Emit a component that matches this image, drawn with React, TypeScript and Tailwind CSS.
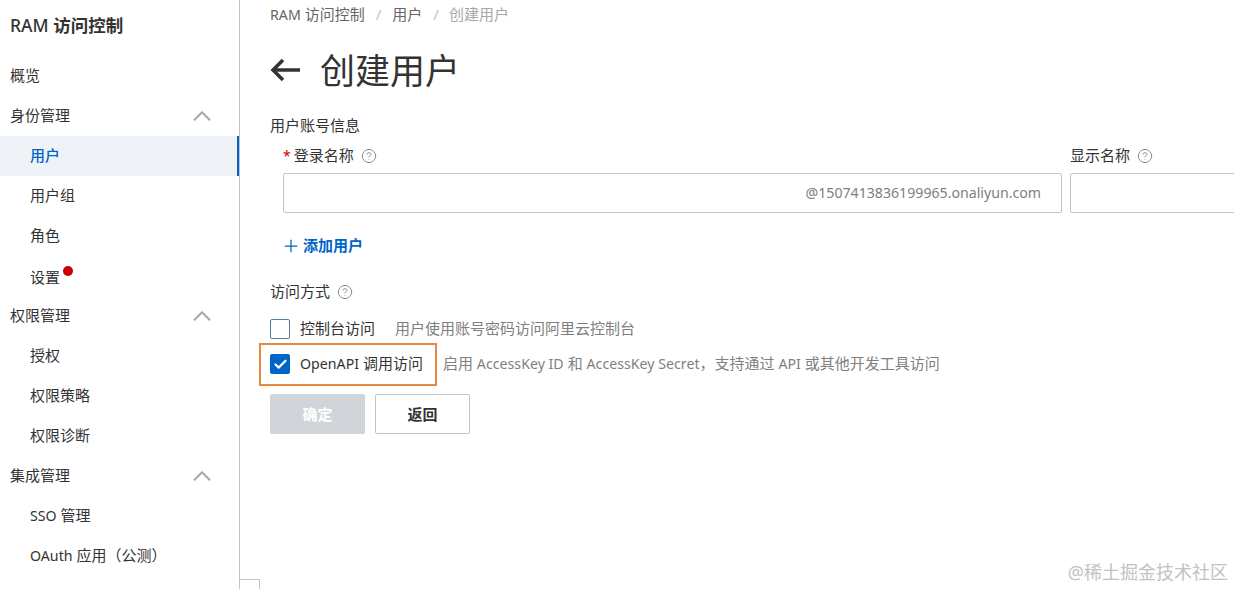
import { Check, ChevronUp, CircleHelp, Plus } from 'lucide-react'

const fontStack = "font-['Noto_Sans','Noto_Sans_CJK_SC',sans-serif]"
const raised = 'inline-block -translate-y-px'

const menu = [
  { label: '概览' },
  { label: '身份管理', group: true },
  { label: '用户', sub: true, active: true },
  { label: '用户组', sub: true },
  { label: '角色', sub: true },
  { label: '设置', sub: true, dot: true },
  { label: '权限管理', group: true },
  { label: '授权', sub: true },
  { label: '权限策略', sub: true },
  { label: '权限诊断', sub: true },
  { label: '集成管理', group: true },
  { label: 'SSO 管理', sub: true },
  { label: 'OAuth 应用（公测）', sub: true },
]

// latin runs sit a bit smaller next to 15px CJK, same proportions as the original font pair
function Mixed({ text }: { text: string }) {
  return (
    <span className={raised}>
      {text.split(/([A-Za-z0-9@.]+(?: [A-Za-z0-9@.]+)*)/).map((part, index) =>
        index % 2 === 1 ? (
          <span key={index} className="text-[14.2px]">
            {part}
          </span>
        ) : (
          part
        ),
      )}
    </span>
  )
}

function Help({ className = '' }: { className?: string }) {
  return <CircleHelp size={16} strokeWidth={1.5} className={`text-[#8a8a8a] shrink-0 ${className}`} />
}

export default function App() {
  return (
    <div className={`relative flex w-[1234px] h-[589px] overflow-hidden bg-white text-[15px] text-[#333333] ${fontStack}`}>
      {/* Sidebar */}
      <aside className="w-[240px] shrink-0 border-r border-[#c4c4c4]">
        <div className="h-[56px] pl-[10px] pt-[12px] leading-[26px] text-[#333333]">
          <span className="text-[17.5px] font-medium">RAM </span>
          <span className="text-[17.5px] font-bold">访问控制</span>
        </div>
        {menu.map((item) => (
          <div
            key={item.label}
            className={`relative flex items-center h-10 ${item.sub ? 'pl-[30px]' : 'pl-[10px]'} ${
              item.active ? 'bg-[#eff3f8] border-r-2 border-[#0064c8] font-medium text-[#0064c8]' : ''
            } ${item.dot ? 'pt-1' : ''}`}
          >
            <Mixed text={item.label} />
            {item.dot && <span className="absolute left-[63px] top-[10px] w-[10px] h-[10px] rounded-full bg-[#c80000]" />}
            {item.group && <ChevronUp size={30} strokeWidth={1.6} className="ml-auto mr-[22px] text-[#a8a8a8]" />}
          </div>
        ))}
      </aside>

      {/* Main */}
      <main className="flex-1 min-w-0 pl-[30px]">
        <div className="flex items-center h-[30px] text-[#666666]">
          <Mixed text="RAM 访问控制" />
          <span className={`mx-[11px] text-[#c4c4c4] ${raised}`}>/</span>
          <span className={raised}>用户</span>
          <span className={`ml-[11px] mr-[10px] text-[#c4c4c4] ${raised}`}>/</span>
          <span className={`text-[#a8a8a8] ${raised}`}>创建用户</span>
        </div>

        <div className="flex items-center h-[50px] mt-[15px]">
          <svg width="30" height="24" viewBox="0 0 30 24" fill="none" stroke="#333333" strokeWidth="3.5" className="shrink-0">
            <path d="M3 12H30" />
            <path d="M13 2L3 12L13 22" />
          </svg>
          <h1 className="ml-[20px] text-[35px] leading-[50px] font-normal text-[#333333] translate-y-px">创建用户</h1>
        </div>

        <div className="mt-[21px] leading-5">
          <span className={raised}>用户账号信息</span>
        </div>

        <div className="flex pl-[13px] mt-[10px] gap-2">
          <div className="w-[779px] shrink-0">
            <div className="flex items-center h-5 gap-[7px]">
              <span className={raised}>
                <span className="text-sm text-[#c80000] mr-[3px]">*</span>登录名称
              </span>
              <Help />
            </div>
            <div className="flex items-center justify-end h-10 mt-[7px] pr-5 rounded-[2px] border border-[#c4c4c4] text-[14.15px] text-[#808080]">
              @1507413836199965.onaliyun.com
            </div>
          </div>
          <div className="w-[300px] shrink-0">
            <div className="flex items-center h-5 gap-[7px]">
              <span className={raised}>显示名称</span>
              <Help />
            </div>
            <div className="h-10 mt-[7px] rounded-[2px] border border-[#c4c4c4]" />
          </div>
        </div>

        <div className="flex items-center h-5 mt-[23px] ml-[11px] text-[#0064c8] font-bold">
          <Plus size={20} strokeWidth={1.5} className="mr-[2px]" />
          <span className={raised}>添加用户</span>
        </div>

        <div className="flex items-center h-5 mt-[26px] gap-[7px]">
          <span className={raised}>访问方式</span>
          <Help />
        </div>

        <div className="flex items-center h-5 mt-[17px]">
          <span className="w-5 h-5 shrink-0 rounded-[2px] border border-[#5c7a99]" />
          <span className={`ml-[10px] ${raised}`}>控制台访问</span>
          <span className={`ml-[20px] text-[#808080] ${raised}`}>用户使用账号密码访问阿里云控制台</span>
        </div>

        <div className="flex items-center h-5 mt-[15px]">
          <span className="flex items-center justify-center w-5 h-5 shrink-0 rounded-[2px] bg-[#0064c8]">
            <Check size={15} strokeWidth={3.5} className="text-white" />
          </span>
          <span className="ml-[10px]">
            <Mixed text="OpenAPI 调用访问" />
          </span>
          <span className="ml-[20px] text-[#808080]">
            <Mixed text="启用 AccessKey ID 和 AccessKey Secret，支持通过 API 或其他开发工具访问" />
          </span>
        </div>

        <div className="flex mt-[20px] gap-[10px]">
          <button className="w-[95px] h-10 rounded-[2px] bg-[#d1d5d9] font-bold text-white">确定</button>
          <button className="w-[95px] h-10 rounded-[2px] border border-[#c4c4c4] font-bold text-[#333333]">返回</button>
        </div>
      </main>

      {/* Annotation over the screenshot */}
      <div className="absolute left-[259px] top-[343px] w-[178px] h-[43px] border-2 border-[#e8873e]" />

      {/* Collapse handle */}
      <div className="absolute left-[239px] top-[579px] w-[21px] h-[20px] border border-[#c4c4c4] bg-white" />

      {/* Watermark */}
      <div className="absolute right-[6px] top-[562px] text-lg leading-5 text-[#c2c2c2]">@稀土掘金技术社区</div>
    </div>
  )
}
